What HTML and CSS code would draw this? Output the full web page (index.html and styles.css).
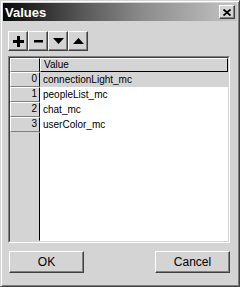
FILE: index.html
```html
<!DOCTYPE html>
<html lang="en">

<head>
    <meta charset="UTF-8">
    <title>Values</title>
    <link rel="stylesheet" href="styles.css">
</head>

<body>
    <div class="win">
        <div class="titlebar">
            <span class="title">Values</span>
            <button class="close">
                <svg width="8" height="7" viewBox="0 0 8 7">
                    <path d="M0.5 0.5 L7.5 6.5 M7.5 0.5 L0.5 6.5" stroke="#000" stroke-width="1.8" fill="none" />
                </svg>
            </button>
        </div>

        <div class="tools">
            <button class="tool">
                <svg width="11" height="11" viewBox="0 0 11 11">
                    <path d="M0 4h11v3H0z M4 0h3v11H4z" fill="#000" />
                </svg>
            </button>
            <button class="tool">
                <svg width="9" height="3" viewBox="0 0 9 3">
                    <path d="M0 0h9v2.5H0z" fill="#000" />
                </svg>
            </button>
            <button class="tool">
                <svg width="11" height="6" viewBox="0 0 11 6">
                    <path d="M0 0h11L5.5 6z" fill="#000" />
                </svg>
            </button>
            <button class="tool">
                <svg width="11" height="6" viewBox="0 0 11 6">
                    <path d="M0 6h11L5.5 0z" fill="#000" />
                </svg>
            </button>
        </div>

        <div class="grid">
            <div class="grid-inner">
                <div class="row head">
                    <div class="num"></div>
                    <div class="cell">Value</div>
                </div>
                <div class="row sel">
                    <div class="num">0</div>
                    <div class="cell">connectionLight_mc</div>
                </div>
                <div class="row">
                    <div class="num">1</div>
                    <div class="cell">peopleList_mc</div>
                </div>
                <div class="row">
                    <div class="num">2</div>
                    <div class="cell">chat_mc</div>
                </div>
                <div class="row">
                    <div class="num">3</div>
                    <div class="cell">userColor_mc</div>
                </div>
                <div class="row rest">
                    <div class="num"></div>
                    <div class="cell"></div>
                </div>
            </div>
        </div>

        <div class="actions">
            <button class="btn">OK</button>
            <button class="btn">Cancel</button>
        </div>
    </div>
</body>

</html>
```

FILE: styles.css
```css
* {
    box-sizing: border-box;
    padding: 0;
    margin: 0;
}

body {
    width: 240px;
    height: 287px;
    background: #d4d4d4;
    font-family: "Liberation Sans", Arial, sans-serif;
    font-size: 10px;
    color: #000;
}

button {
    font-family: inherit;
    font-size: inherit;
    color: #000;
    background: #d4d4d4;
    border: 1px solid;
    border-color: #fff #404040 #404040 #fff;
    box-shadow: inset -1px -1px 0 #808080;
    display: flex;
    align-items: center;
    justify-content: center;
}

.win {
    width: 240px;
    height: 287px;
    border: 1px solid;
    border-color: #d4d4d4 #404040 #404040 #d4d4d4;
    box-shadow: inset 1px 1px 0 #fff, inset -1px -1px 0 #808080;
    padding: 2px;
    display: flex;
    flex-direction: column;
}

.titlebar {
    height: 18px;
    background: linear-gradient(to right, #080808, #5a5a5a 35%, #8c8c8c 60%, #c4c4c4);
    display: flex;
    align-items: center;
    justify-content: space-between;
    padding: 0 2px 0 2px;
}

.title {
    color: #fff;
    font-weight: bold;
    font-size: 13px;
}

.close {
    width: 16px;
    height: 14px;
}

.tools {
    display: flex;
    margin: 10px 0 0 5px;
}

.tool {
    width: 20px;
    height: 20px;
}

.grid {
    margin: 5px 7px 0 5px;
    height: 187px;
    border: 1px solid;
    border-color: #808080 #fff #fff #808080;
}

.grid-inner {
    height: 100%;
    border: 1px solid;
    border-color: #404040 #d4d4d4 #d4d4d4 #404040;
    display: flex;
    flex-direction: column;
    background: #fff;
}

.row {
    display: flex;
    height: 15px;
}

.row.head {
    height: 14px;
}

.row.rest {
    flex: 1;
}

.num {
    width: 30px;
    background: #d4d4d4;
    border: 1px solid;
    border-color: #fff #000 #808080 #fff;
    text-align: right;
    padding-right: 2px;
    line-height: 12px;
}

.rest .num {
    border-color: #d4d4d4 #000 #d4d4d4 #d4d4d4;
}

.cell {
    flex: 1;
    padding-left: 3px;
    line-height: 15px;
}

.head .cell {
    background: #d4d4d4;
    border: 1px solid;
    border-color: #fff #000 #000 #fff;
    line-height: 12px;
}

.sel .cell {
    background: #d4d4d4;
}

.actions {
    display: flex;
    justify-content: space-between;
    margin: 8px 7px 0 6px;
}

.btn {
    width: 75px;
    height: 22px;
    font-size: 12px;
}
```
